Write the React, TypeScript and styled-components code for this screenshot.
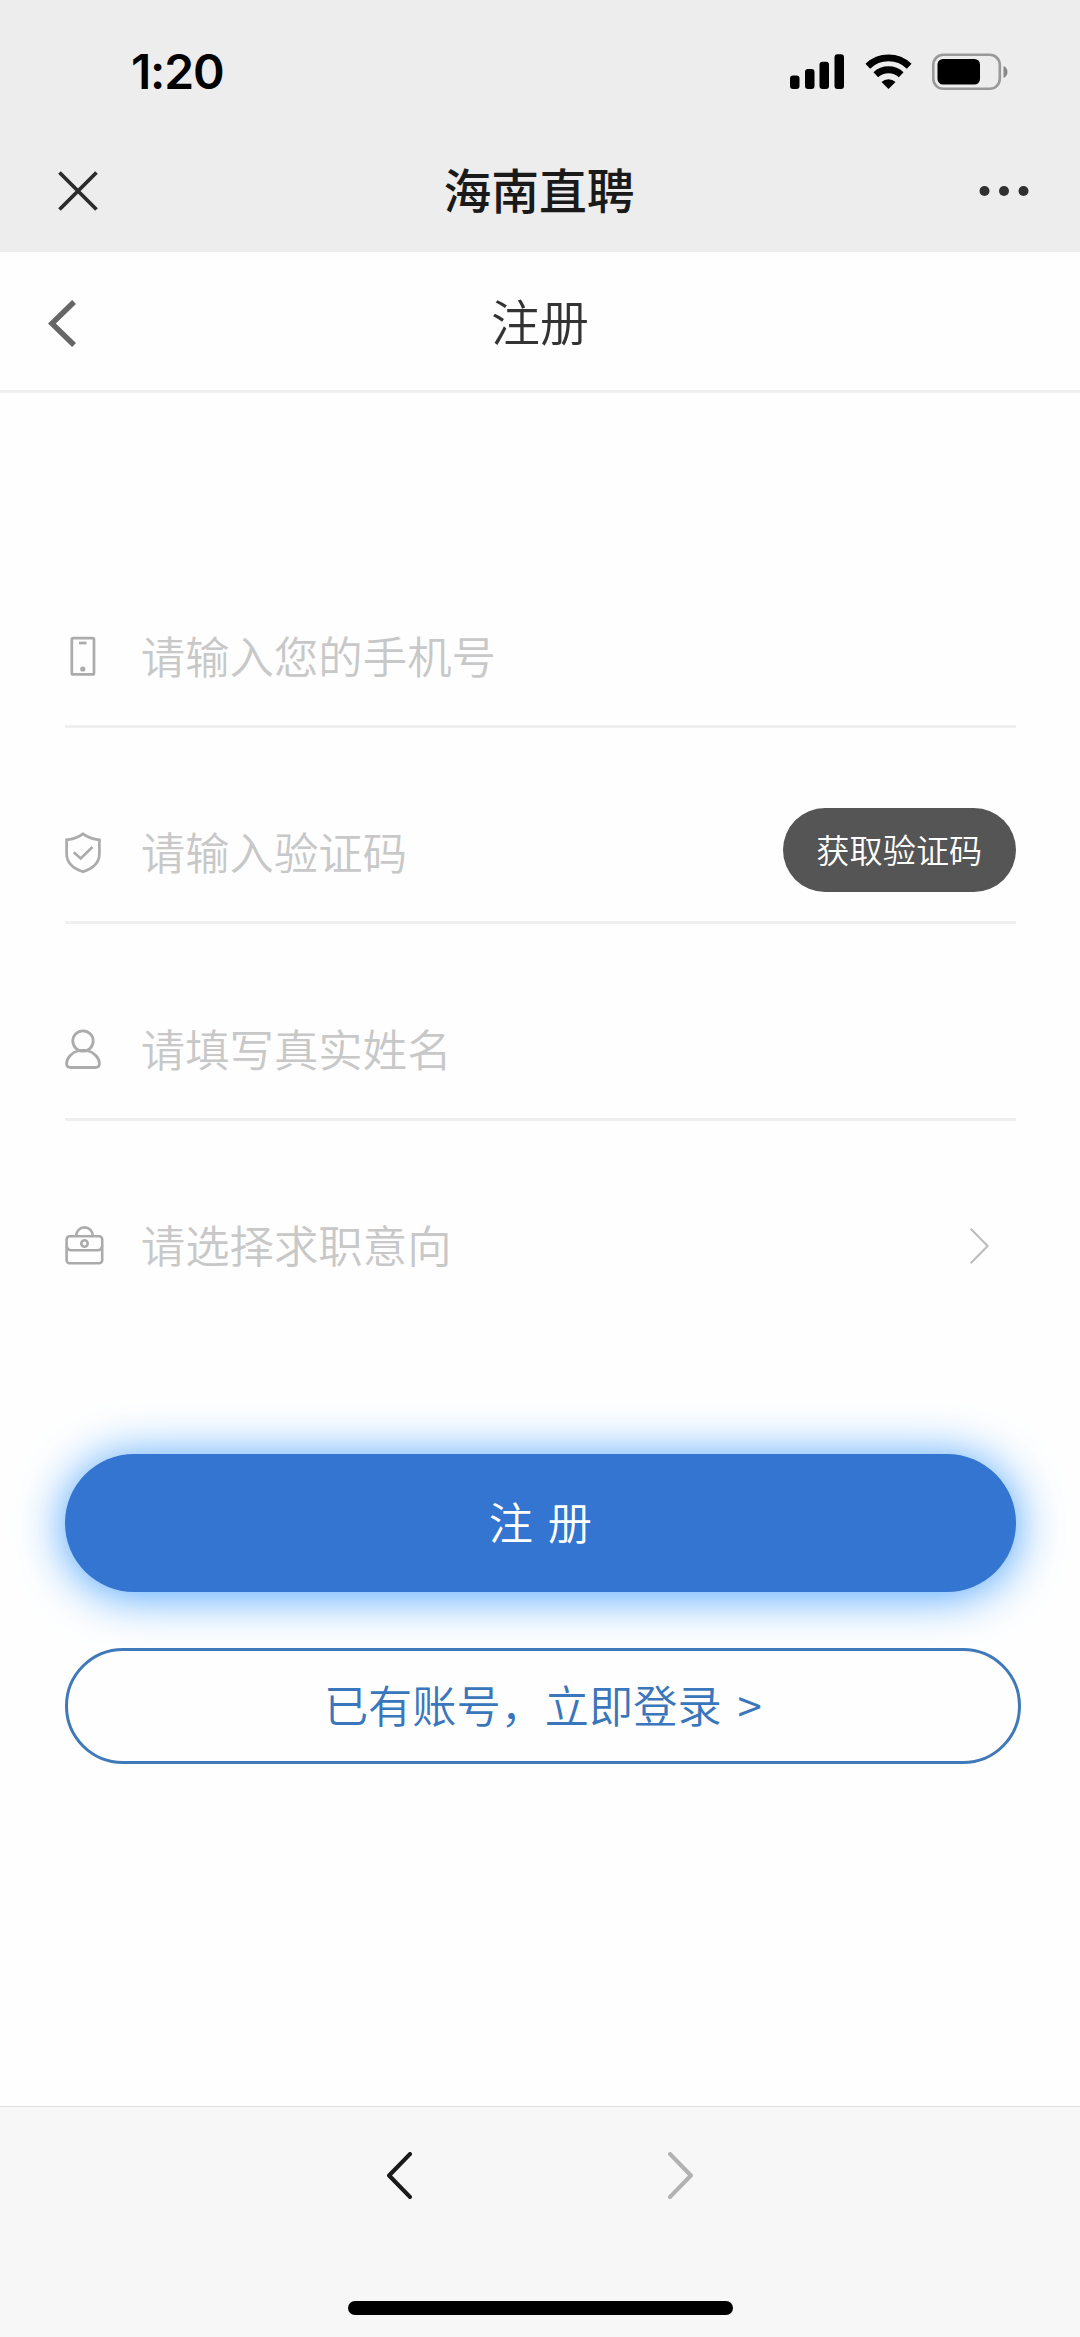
import React from 'react';
import styled, { createGlobalStyle } from 'styled-components';

const Global = createGlobalStyle`
  * { box-sizing: border-box; }
  body { margin: 0; background: #fefefe; }
  button, input { font: inherit; border: 0; padding: 0; background: none; outline: 0; }
`;

const Screen = styled.div`
  width: 1080px;
  height: 2337px;
  display: flex;
  flex-direction: column;
  background: #fefefe;
  color: #333;
  font-family: 'Noto Sans CJK SC', sans-serif;
  svg { display: block; flex: none; }
`;

const Chrome = styled.header`
  height: 252px;
  background: #ededed;
  display: flex;
  flex-direction: column;
`;

const StatusBar = styled.div`
  height: 130px;
  padding: 14px 72px 0 131px;
  display: flex;
  align-items: center;
  justify-content: space-between;
`;

const Clock = styled.span`
  font: 600 48px/60px Inter, sans-serif;
  letter-spacing: -1.2px;
  color: #000;
`;

const StatusIcons = styled.div`
  display: flex;
  align-items: center;
  gap: 20px;
`;

const TitleRow = styled.div`
  height: 122px;
  padding: 0 51px 0 57px;
  display: grid;
  grid-template-columns: 100px 1fr 108px;
  align-items: center;
`;

const AppTitle = styled.h1`
  margin: 0;
  padding-bottom: 4px;
  font-size: 47.8px;
  line-height: 70px;
  font-weight: 500;
  color: #1a1a1a;
  text-align: center;
`;

const End = styled.div`
  display: flex;
  justify-content: flex-end;
`;

const PageNav = styled.nav`
  height: 141px;
  padding: 4px 48px 0;
  display: grid;
  grid-template-columns: 100px 1fr 100px;
  align-items: center;
  border-bottom: 3px solid #f0f0f0;
`;

const PageTitle = styled.h2`
  margin: 0;
  padding-bottom: 6px;
  font-size: 49px;
  line-height: 70px;
  font-weight: 350;
  text-align: center;
`;

const Form = styled.form`
  flex: 1;
  padding: 138px 59px 0 64.8px;
  display: flex;
  flex-direction: column;
`;

const Field = styled.label<{ $last?: boolean }>`
  height: 196.5px;
  width: 951px;
  padding-top: 58px;
  display: flex;
  align-items: center;
  border-bottom: 3px solid ${(p) => (p.$last ? 'transparent' : '#efefef')};
`;

const FieldIcon = styled.span`
  width: 76px;
`;

const Input = styled.input`
  flex: 1;
  min-width: 0;
  height: 70px;
  padding-bottom: 5px;
  font-size: 44.4px;
  font-weight: 350;
  color: #333;
  &::placeholder { color: #c8c8c8; opacity: 1; }
`;

const CodeButton = styled.button`
  width: 233px;
  height: 84px;
  margin-top: -7px;
  padding-bottom: 3px;
  border-radius: 42px;
  background: #555;
  color: #fff;
  font-size: 33.2px;
  font-weight: 350;
`;

const Arrow = styled.span`
  margin-right: 27px;
`;

const Submit = styled.button`
  width: 951px;
  height: 138px;
  margin-top: 137px;
  padding-bottom: 5px;
  border-radius: 69px;
  background: #3375d0;
  box-shadow: 0 3px 48px #45a0ff;
  color: #fff;
  font-size: 44.2px;
  font-weight: 350;
  word-spacing: 5px;
`;

const Login = styled.button`
  width: 956px;
  height: 116px;
  margin-top: 56px;
  padding-bottom: 5px;
  border: 3px solid #3f79b9;
  border-radius: 58px;
  background: #fefefe;
  color: #3a76bb;
  font-size: 44.2px;
  font-weight: 350;
  word-spacing: 6px;
`;

const Toolbar = styled.footer`
  height: 231px;
  background: #f7f7f7;
  border-top: 1px solid #dfdfdf;
  display: flex;
  flex-direction: column;
  align-items: center;
  justify-content: space-between;
  padding: 45px 0 22px;
`;

const ToolbarButtons = styled.div`
  display: flex;
  gap: 256px;
`;

const HomeBar = styled.div`
  width: 385px;
  height: 14px;
  border-radius: 7px;
  background: #000;
`;

const ICON = '#ababab';

const Signal = () => (
  <svg width="55" height="36" viewBox="0 0 55 36">
    <rect x="0" y="21.500" width="9.500" height="13.500" rx="3" />
    <rect x="15" y="15" width="9.500" height="20" rx="3" />
    <rect x="29.500" y="7.800" width="9.500" height="27.200" rx="3" />
    <rect x="44.500" y="0.300" width="9.500" height="34.700" rx="3" />
  </svg>
);

const Wifi = () => (
  <svg width="47" height="36" viewBox="0 0 47 36" fill="none" stroke="#000" strokeWidth="6.800">
    <path d="M2.800 12.200a30 30 0 0 1 41.400 0" />
    <path d="M10.800 20.800a18.500 18.500 0 0 1 25.400 0" />
    <path d="M16.500 28a10 10 0 0 1 14 0l-7 7z" fill="#000" stroke="none" />
  </svg>
);

const Battery = () => (
  <svg width="76" height="38" viewBox="0 0 76 38">
    <rect x="1.300" y="1.800" width="66.500" height="34" rx="10" fill="none" stroke="#999" strokeWidth="2.600" />
    <rect x="5.500" y="6" width="42.500" height="25.500" rx="5.500" />
    <path d="M71.500 13c2.600 1 4 3.400 4 6s-1.400 5-4 6z" fill="#888" />
  </svg>
);

const Close = () => (
  <svg width="42" height="42" viewBox="0 0 42 42" stroke="#2b2b2b" strokeWidth="3.800">
    <path d="M2.500 2.500l37 37M39.500 2.500L2.500 39.500" />
  </svg>
);

const More = () => (
  <svg width="50" height="12" viewBox="0 0 50 12" fill="#303030">
    <circle cx="5.500" cy="6" r="5" />
    <circle cx="25" cy="6" r="5" />
    <circle cx="44.500" cy="6" r="5" />
  </svg>
);

const Chevron = ({ w, h, s, color, right, round }: {
  w: number; h: number; s: number; color: string; right?: boolean; round?: boolean;
}) => {
  const end = s * (round ? 0.5 : 0.35);
  const tip = s * (round ? 0.5 : 0.7);
  const open = right ? end : w - end;
  const point = right ? w - tip : tip;
  return (
    <svg width={w} height={h} viewBox={`0 0 ${w} ${h}`} fill="none" stroke={color} strokeWidth={s}
      strokeLinecap={round ? 'round' : 'butt'} strokeLinejoin={round ? 'round' : 'miter'}>
      <path d={`M${open} ${end}L${point} ${h / 2}L${open} ${h - end}`} />
    </svg>
  );
};

const Phone = () => (
  <svg width="40" height="42" viewBox="0 0 40 42" fill="none" stroke={ICON} strokeWidth="2.700">
    <rect x="6.800" y="2.200" width="22.200" height="36.200" rx="1.500" />
    <path d="M14 7h7.500" />
    <circle cx="17.800" cy="33" r="2.600" fill={ICON} stroke="none" />
  </svg>
);

const Shield = () => (
  <svg width="40" height="42" viewBox="0 0 40 42" fill="none" stroke={ICON} strokeWidth="2.700">
    <path d="M18 1.800c4.800 3.600 10 5.400 16.400 6v14c0 8.200-6.100 14.600-16.400 18C7.700 36.400 1.600 30 1.600 21.800v-14c6.400-.6 11.600-2.400 16.400-6z" />
    <path d="M8.800 20.300l6.900 6.200L27.500 15" />
  </svg>
);

const Person = () => (
  <svg width="40" height="42" viewBox="0 0 40 42" fill="none" stroke={ICON} strokeWidth="2.800">
    <circle cx="18" cy="12" r="10.200" />
    <path d="M12.500 22C7 23.500 1.600 29 1.600 34.500c0 2.800 1.500 4 4 4h24.800c2.500 0 4-1.200 4-4C34.400 29 29 23.500 23.500 22c-3.500-.9-7.500-.9-11 0z" />
  </svg>
);

const Briefcase = () => (
  <svg width="40" height="42" viewBox="0 0 40 42" fill="none" stroke={ICON} strokeWidth="2.600">
    <rect x="1.600" y="11.200" width="35.600" height="27" rx="3" />
    <path d="M11 11.200c.5-5 3.700-8.800 8.500-8.800s8 3.800 8.500 8.800M1.600 21c.6 2.600 2 4.200 4.700 4.200h26.200c2.700 0 4.100-1.600 4.700-4.200" />
    <circle cx="19.500" cy="18.500" r="3.200" />
  </svg>
);

export default function App() {
  return (
    <>
      <Global />
      <Screen>
        <Chrome>
          <StatusBar>
            <Clock>1:20</Clock>
            <StatusIcons><Signal /><Wifi /><Battery /></StatusIcons>
          </StatusBar>
          <TitleRow>
            <Close />
            <AppTitle>海南直聘</AppTitle>
            <End><More /></End>
          </TitleRow>
        </Chrome>
        <PageNav>
          <Chevron w={28} h={47} s={5.5} color="#666" />
          <PageTitle>注册</PageTitle>
        </PageNav>
        <Form>
          <Field>
            <FieldIcon><Phone /></FieldIcon>
            <Input placeholder="请输入您的手机号" />
          </Field>
          <Field>
            <FieldIcon><Shield /></FieldIcon>
            <Input placeholder="请输入验证码" />
            <CodeButton type="button">获取验证码</CodeButton>
          </Field>
          <Field>
            <FieldIcon><Person /></FieldIcon>
            <Input placeholder="请填写真实姓名" />
          </Field>
          <Field $last>
            <FieldIcon><Briefcase /></FieldIcon>
            <Input placeholder="请选择求职意向" readOnly />
            <Arrow><Chevron w={19} h={36} s={2} color="#bbb" right /></Arrow>
          </Field>
          <Submit type="button">注 册</Submit>
          <Login type="button">已有账号，立即登录 &gt;</Login>
        </Form>
        <Toolbar>
          <ToolbarButtons>
            <Chevron w={25} h={47} s={4.2} color="#1a1a1a" round />
            <Chevron w={25} h={47} s={4.2} color="#b2b2b2" right round />
          </ToolbarButtons>
          <HomeBar />
        </Toolbar>
      </Screen>
    </>
  );
}
